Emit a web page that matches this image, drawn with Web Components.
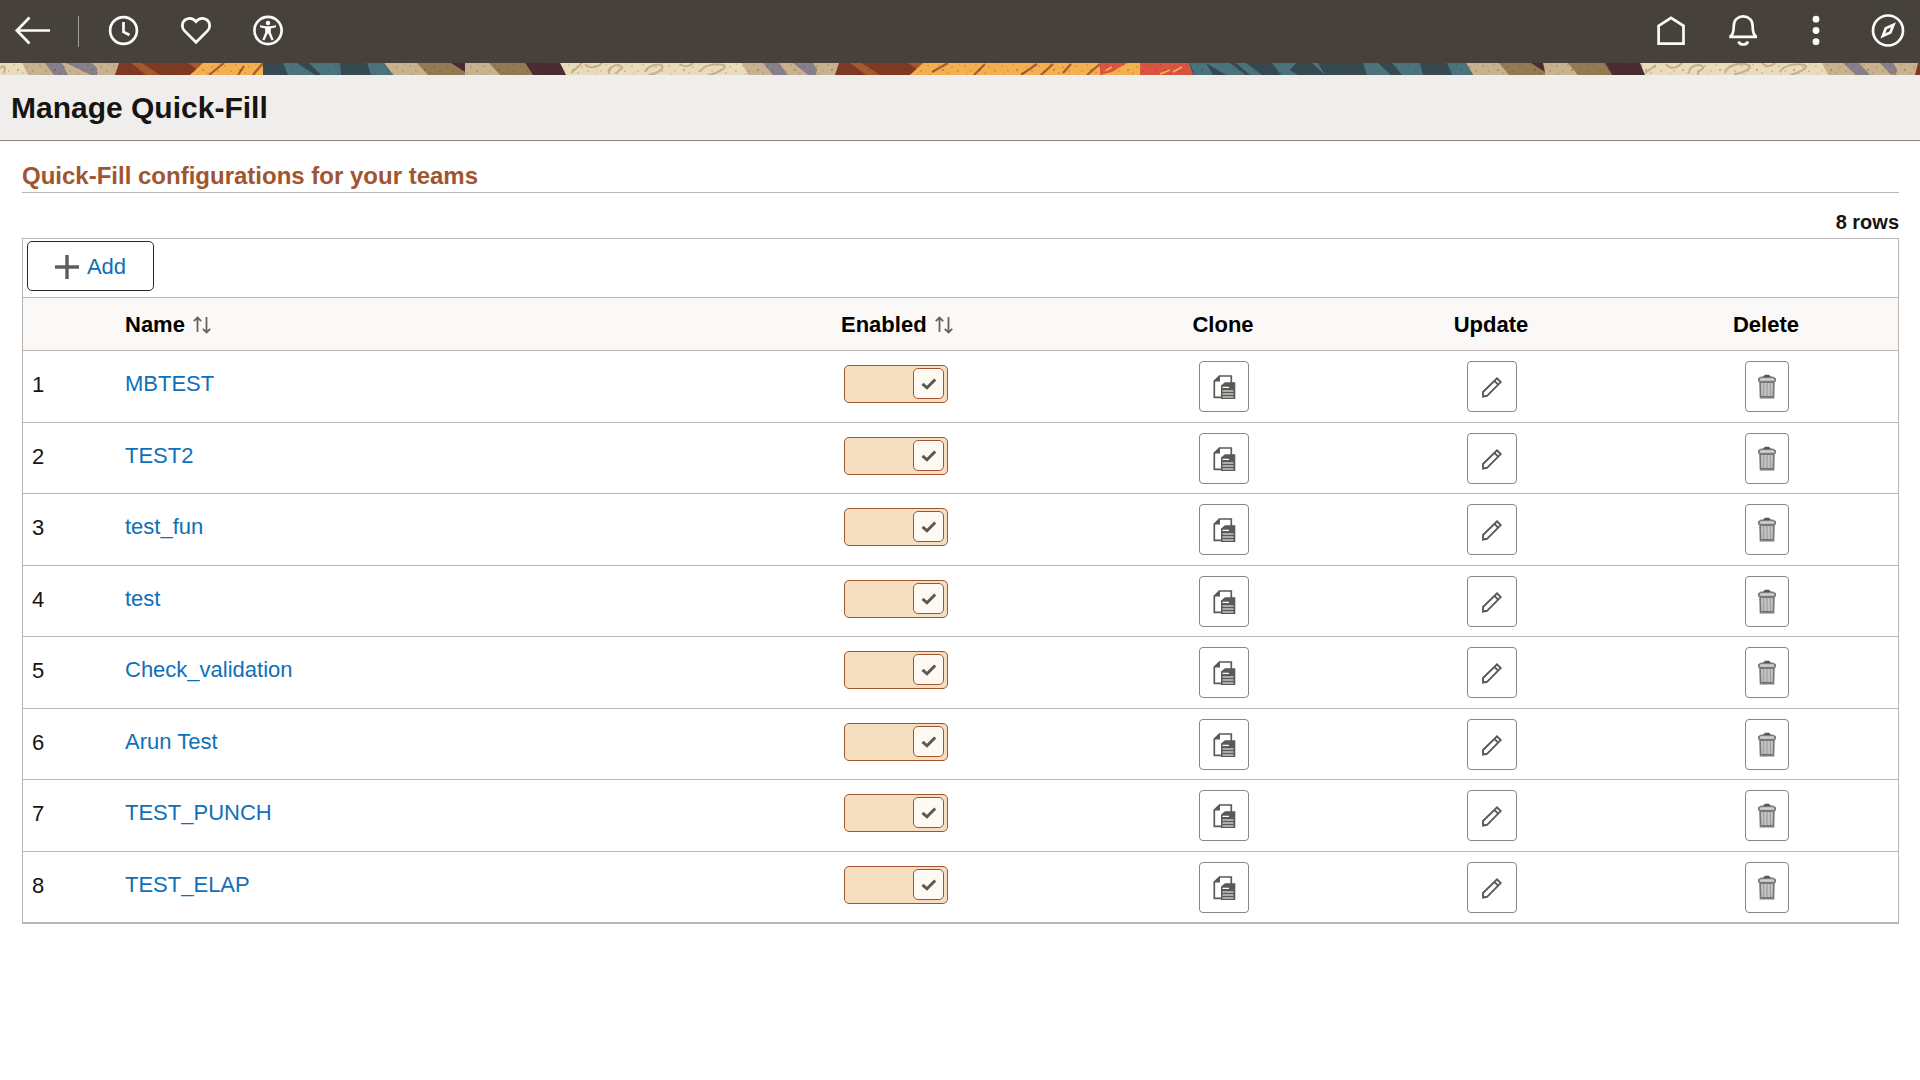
<!DOCTYPE html>
<html lang="en">
<head>
<meta charset="utf-8">
<title>Manage Quick-Fill</title>
<style>
  body { margin: 0; background: #fff; color: #161513; font-family: "Liberation Sans", Arial, sans-serif; font-size: 22px; }
</style>
</head>
<body>
<quick-fill-page></quick-fill-page>

<script>
const ICONS = {
  back: ['0 0 36 36', '<path d="M36 17.500H3M15.500 4.500 2.800 17.500 15.500 30.500" class="s"/>'],
  clock: ['0 0 36 36', '<circle cx="17.500" cy="17.500" r="13.400" class="s"/><path d="M17.500 9v10l6 3" class="s"/>'],
  heart: ['0 0 36 36', '<path d="M18 29.300 6.600 17.900C3 14 4 8.500 7.800 6.500 11.500 4.700 15.500 5.700 18 8.600 20.500 5.700 24.500 4.700 28.200 6.500 32 8.500 33 14 29.400 17.900Z" class="s"/>'],
  access: ['0 0 36 36', '<circle cx="18" cy="17.500" r="13.600" class="s"/><circle cx="18" cy="10" r="2.200" fill="currentColor"/><path d="M10 12.200 16 13.200h4l6-1v2l-5.200 1.300v4l2.800 7.200-2 .8-3.300-7h-.6l-3.300 7-2-.8 2.800-7.200v-4L10 14.200Z" fill="currentColor"/>'],
  home: ['0 0 36 36', '<path d="M4.600 12.800 17 4.900l12.500 7.900v17.800H4.600Z" class="s"/>'],
  bell: ['0 0 36 36', '<path d="M3.200 23.900H31M4.200 23.500C7.200 22 7.800 18 7.800 12.500 7.800 7 12 3.400 17.200 3.400S26.600 7 26.600 12.500c0 5.500.6 9.500 3.600 11" class="s"/><path d="M12.500 28.500c1.500 4 8 4 9.500 0" class="s"/>'],
  more: ['0 0 36 36', '<g fill="currentColor"><circle cx="18" cy="6.200" r="3.400"/><circle cx="18" cy="17.500" r="3.400"/><circle cx="18" cy="28.700" r="3.400"/></g>'],
  compass: ['0 0 36 36', '<circle cx="18" cy="17.500" r="15" class="s"/><path d="M23.500 11.800 20.400 19.600 12.800 23 15.800 15.200Z" class="s"/>'],
  plus: ['0 0 24 24', '<path d="M10.300 0h3.400v10.300H24v3.400H13.700V24h-3.400V13.700H0v-3.400h10.300Z" fill="currentColor"/>'],
  sort: ['0 0 18 18', '<path d="M4.500 16V2M.8 5.200 4.500 1.500 8.200 5.200M13.500 1v15M9.800 12.800l3.700 3.700 3.700-3.700" fill="none" stroke="currentColor" stroke-width="1.800"/>'],
  clone: ['0 0 24 25', '<path d="M19.300 9V2H7.500L2.300 7v16.300H9" fill="none" stroke="currentColor" stroke-width="1.700"/><path d="M1.500 7.500 8 1.200V7.500Z" fill="currentColor"/><path d="M13 8.300H23.300V25H9V11.500Z" fill="currentColor"/><path d="M10.500 13.300h6.500M10.500 17h11M10.500 20h11M10.500 23h11" stroke="#fff" stroke-width="1.200"/>'],
  pencil: ['0 0 24 25', '<path d="M3 22.500V18L17 4.300l3.700 3.800L7 21.800Z M14.300 6.800l3.900 3.900" fill="none" stroke="currentColor" stroke-width="1.900"/>'],
  trash: ['0 0 24 25', '<path d="M4.200 6.500h15.600L19.300 24.500H4.700Z" fill="#777"/><path d="M6 9h12l-.5 14.500H6.500Z" fill="#c4c4c4"/><path d="M8.600 9v13.500M12 9v13.500M15.400 9v13.500" stroke="#a0a0a0" stroke-width="1.300"/><path d="M6.500 22.800h11" stroke="#666" stroke-width="1.400"/><path d="M3 7.700V4.200L6 2.500h12l3 1.700v3.500Z" fill="#7c7c7c"/><path d="M4.500 6.700 5.500 4.200h13l1 2.500Z" fill="#d2d2d2"/><path d="M8 3 10 .8h4L16 3Z" fill="#555"/>'],
  check: ['0 0 16 12', '<path d="M1.500 5.800 6 9.800 14.200 1.500" fill="none" stroke="currentColor" stroke-width="3"/>']
};

class UiIcon extends HTMLElement {
  connectedCallback() {
    const [box, shapes] = ICONS[this.getAttribute('name')];
    const [, , w, h] = box.split(' ');
    this.attachShadow({ mode: 'open' }).innerHTML = `
      <style>
        :host { display: inline-flex; flex: none; }
        svg { display: block; }
        .s { fill: none; stroke: currentColor; stroke-width: 2.700; }
      </style>
      <svg viewBox="${box}" width="${w}" height="${h}" aria-hidden="true">${shapes}</svg>`;
  }
}
customElements.define('ui-icon', UiIcon);

class NavButton extends HTMLElement {
  connectedCallback() {
    this.attachShadow({ mode: 'open' }).innerHTML = `
      <style>
        :host { display: flex; }
        button { display: flex; justify-content: center; align-items: center; width: 56px; height: 48px;
                 margin: 0; padding: 0; border: 0; background: none; color: #fcfbfa; cursor: pointer; }
      </style>
      <button type="button" aria-label="${this.getAttribute('label')}"><ui-icon name="${this.getAttribute('icon')}"></ui-icon></button>`;
  }
}
customElements.define('nav-button', NavButton);

class AppBar extends HTMLElement {
  connectedCallback() {
    this.attachShadow({ mode: 'open' }).innerHTML = `
      <style>
        :host { display: block; background: #47413c; }
        header { display: flex; justify-content: space-between; align-items: center; height: 62px; padding: 0 4px 1px; }
        nav { display: flex; align-items: center; gap: 16px; }
        .rule { width: 1px; height: 31px; margin: 0 1px 0 2px; background: #a39f9b; }
      </style>
      <header>
        <nav aria-label="History">
          <nav-button icon="back" label="Back"></nav-button>
          <span class="rule"></span>
          <nav-button icon="clock" label="Recently visited"></nav-button>
          <nav-button icon="heart" label="Favorites"></nav-button>
          <nav-button icon="access" label="Accessibility"></nav-button>
        </nav>
        <nav aria-label="Global">
          <nav-button icon="home" label="Home"></nav-button>
          <nav-button icon="bell" label="Notifications"></nav-button>
          <nav-button icon="more" label="Actions"></nav-button>
          <nav-button icon="compass" label="Navigation bar"></nav-button>
        </nav>
      </header>`;
  }
}
customElements.define('app-bar', AppBar);

class ArtStrip extends HTMLElement {
  connectedCallback() {
    const poly = (fill, list) => list.map(p => `<polygon fill="${fill}" points="${p}"/>`).join('');
    this.attachShadow({ mode: 'open' }).innerHTML = `
      <style>:host { display: block; } svg { display: block; width: 100%; height: 12px; }</style>
      <svg viewBox="0 0 1920 12" preserveAspectRatio="xMidYMin slice" aria-hidden="true">
        <defs>
          <pattern id="grain" width="37" height="12" patternUnits="userSpaceOnUse">
            <g fill="#4a3628" fill-opacity=".38">
              <circle cx="3" cy="3" r=".8"/><circle cx="9" cy="8" r=".7"/><circle cx="14" cy="2" r=".7"/>
              <circle cx="18" cy="7" r="1"/><circle cx="23" cy="10" r=".7"/><circle cx="27" cy="4" r=".8"/>
              <circle cx="33" cy="8" r=".8"/><circle cx="34" cy="1" r=".6"/><circle cx="5" cy="11" r=".6"/>
            </g>
          </pattern>
        </defs>
        <rect width="1920" height="12" fill="#c7b18e"/>
        ${poly('#e9dcbd', ['0,0 22,0 28,12 0,12', '560,0 742,0 748,12 566,12', '1640,0 1822,0 1828,12 1645,12'])}
        ${poly('#87808a', ['45,0 62,0 68,12 54,12', '66,0 92,0 97,5 97,12 91,12', '763,0 779,0 788,12 773,12', '793,0 813,0 817,6 816,12 808,12', '1843,0 1859,0 1870,12 1856,12', '1880,0 1893,0 1897,6 1896,12 1890,11'])}
        ${poly('#7e3922', ['119,0 205,0 190,12 115,12', '839,0 925,0 910,12 835,12', '1918,0 1920,0 1920,12 1915,12'])}
        ${poly('#a65830', ['131,0 142,0 160,12 146,12', '188,0 204,0 198,7', '850,0 862,0 880,12 866,12', '908,0 924,0 918,7'])}
        ${poly('#f4af4e', ['203,0 263,0 263,12 190,12', '923,0 1140,0 1140,12 910,12'])}
        <path d="M224 0 209 12M244 3 238 12M263 0 253 12M985 1 974 12M948 0 932 9M1037 1 1021 12M1053 1 1041 12M1071 1 1063 10M1100 1 1087 12" stroke="#a85a32" stroke-width="2.200" fill="none"/>
        ${poly('#d95441', ['1100,0 1127,0 1112,9 1100,12', '1140,0 1189,0 1193,12 1140,12'])}
        <path d="M1105 8l7-4M1160 11l10-4M1173 9l9-5" stroke="#f4af4e" stroke-width="1.600"/>
        ${poly('#364850', ['263,0 384,0 393,12 263,12', '1189,0 1466,0 1473,12 1193,12'])}
        ${poly('#4b737b', ['283,0 297,0 315,12 288,12', '309,0 340,0 341,12 321,12', '367,0 384,0 393,12 371,12', '1190,0 1206,0 1213,12 1194,12', '1206,0 1230,0 1246,12 1226,12', '1236,0 1246,0 1262,12 1250,12', '1272,0 1296,0 1290,7 1298,12 1281,12', '1312,0 1318,0 1325,12', '1363,0 1378,0 1391,12 1367,12', '1392,0 1420,0 1423,12 1402,12', '1447,0 1466,0 1473,12 1452,12'])}
        ${poly('#947a53', ['417,0 452,0 465,9 465,12 428,12', '489,0 525,0 533,12 500,12', '1499,0 1532,0 1545,9 1545,12 1509,12', '1568,0 1605,0 1612,12 1578,12'])}
        ${poly('#4b2b31', ['451,0 465,0 465,9', '525,0 560,0 566,12 533,12', '1531,0 1543,0 1545,9', '1605,0 1640,0 1645,12 1612,12'])}
        <rect width="1920" height="12" fill="url(#grain)"/>
        <g fill="none" stroke="#c6ae88" stroke-width="2">
          <path d="M0 5c4-4 7 0 3 5M571 10l11-10M585 1c3 5 13 4 17-1M609 11c-2-6 7-11 12-8s-5 3-4 8M645 9c3-7 14-9 17-6s-8 9-14 9M680 1c5 4 10 2 13-1M700 9c3-7 16-9 23-7s-8 9-14 10"/>
          <path d="M1645 10l11-8M1666 1c4 6 12 4 16-1M1689 10c0-6 8-10 13-7s-6 4-4 9M1725 9c3-7 16-10 23-7s-8 9-14 9M1762 0c3 4 9 4 13 0M1780 9c3-7 16-9 24-7s-8 9-14 10"/>
        </g>
      </svg>`;
  }
}
customElements.define('art-strip', ArtStrip);

class PageHeading extends HTMLElement {
  connectedCallback() {
    this.attachShadow({ mode: 'open' }).innerHTML = `
      <style>
        :host { display: block; background: #f0eeec; border-bottom: 1px solid #8b8580; }
        h1 { margin: 0; padding: 0 11px; font-size: 30px; line-height: 65px; font-weight: bold; }
      </style>
      <h1><slot></slot></h1>`;
  }
}
customElements.define('page-heading', PageHeading);

class ToggleSwitch extends HTMLElement {
  connectedCallback() {
    this.attachShadow({ mode: 'open' }).innerHTML = `
      <style>
        :host { display: inline-block; vertical-align: top; }
        label { display: grid; width: 104px; height: 38px; cursor: pointer; }
        input, .knob { grid-area: 1 / 1; box-sizing: border-box; margin: 0; border: 1px solid #a0552f; border-radius: 5px; }
        input { appearance: none; width: 100%; height: 100%; background: #fff; cursor: pointer; }
        input:checked { background: #f5debf; }
        .knob { display: flex; justify-content: center; align-items: center; justify-self: start; align-self: start;
                width: 31px; height: 31px; margin: 3px 4px; background: #fff9f3; color: #5b5956; pointer-events: none; }
        .knob ui-icon { visibility: hidden; }
        input:checked + .knob { justify-self: end; }
        input:checked + .knob ui-icon { visibility: visible; }
      </style>
      <label><input type="checkbox" role="switch" checked aria-label="${this.getAttribute('label')}"><span class="knob"><ui-icon name="check"></ui-icon></span></label>`;
  }
}
customElements.define('toggle-switch', ToggleSwitch);

class RowButton extends HTMLElement {
  connectedCallback() {
    this.attachShadow({ mode: 'open' }).innerHTML = `
      <style>
        :host { display: inline-block; vertical-align: top; width: 50px; }
        :host([icon="trash"]) { width: 44px; }
        button { display: flex; justify-content: center; align-items: center; box-sizing: border-box; width: 100%; height: 51px;
                 margin: 0; padding: 0; border: 1px solid #8b8580; border-radius: 4px; background: #fff; color: #5b5956; cursor: pointer; }
      </style>
      <button type="button" aria-label="${this.getAttribute('label')}"><ui-icon name="${this.getAttribute('icon')}"></ui-icon></button>`;
  }
}
customElements.define('row-button', RowButton);

class QuickFillGrid extends HTMLElement {
  connectedCallback() {
    const names = ['MBTEST', 'TEST2', 'test_fun', 'test', 'Check_validation', 'Arun Test', 'TEST_PUNCH', 'TEST_ELAP'];
    const rows = names.map((name, i) => `
      <tr>
        <td class="num">${i + 1}</td>
        <td class="name"><a href="#${i + 1}">${name}</a></td>
        <td class="on"><toggle-switch label="Enable ${name}"></toggle-switch></td>
        <td class="act"><row-button icon="clone" label="Clone ${name}"></row-button></td>
        <td class="act"><row-button icon="pencil" label="Update ${name}"></row-button></td>
        <td class="act"><row-button icon="trash" label="Delete ${name}"></row-button></td>
      </tr>`).join('');
    this.attachShadow({ mode: 'open' }).innerHTML = `
      <style>
        :host { display: block; border: 1px solid #bab5b0; line-height: 24px; }
        .tools { display: flex; padding: 2px 4px 6px; border-bottom: 1px solid #bab5b0; }
        .add { display: flex; justify-content: center; align-items: center; gap: 8px; box-sizing: border-box; width: 127px; height: 50px;
               margin: 0; padding: 2px 0 0; border: 1px solid #2b2926; border-radius: 5px; background: #fff;
               color: #0f6fb8; font: inherit; cursor: pointer; }
        .add ui-icon { color: #5f5d5a; }
        table { width: 100%; table-layout: fixed; border-collapse: separate; border-spacing: 0; }
        th, td { box-sizing: border-box; padding: 0; border-bottom: 1px solid #bab5b0; text-align: left; vertical-align: top; }
        th { height: 53px; padding: 1px 10px 0; background: #faf9f8; color: #000; font-weight: bold; vertical-align: middle; }
        th.mid { padding: 1px 0 0; text-align: center; }
        .sort { display: inline-flex; align-items: center; gap: 8px; margin: 0; padding: 0; border: 0; background: none;
                color: inherit; font: inherit; cursor: pointer; }
        .sort ui-icon { color: #66635f; }
        tbody tr { height: 71px; }
        tbody tr:nth-child(odd) { height: 72px; }
        .num { padding: 22px 9px 0; }
        .name { padding: 21px 10px 0; }
        .on { padding: 14px 13px 0; }
        .act { padding: 10px 0 0 2px; text-align: center; }
        a { color: #0f6fb8; text-decoration: none; }
        .c-num { width: 92px; } .c-on { width: 267px; } .c-clone { width: 250px; } .c-update { width: 286px; } .c-delete { width: 264px; }
      </style>
      <div class="tools"><button type="button" class="add"><ui-icon name="plus"></ui-icon><span>Add</span></button></div>
      <table>
        <colgroup><col class="c-num"><col><col class="c-on"><col class="c-clone"><col class="c-update"><col class="c-delete"></colgroup>
        <thead>
          <tr>
            <th></th>
            <th scope="col"><button type="button" class="sort">Name<ui-icon name="sort"></ui-icon></button></th>
            <th scope="col"><button type="button" class="sort">Enabled<ui-icon name="sort"></ui-icon></button></th>
            <th scope="col" class="mid">Clone</th><th scope="col" class="mid">Update</th><th scope="col" class="mid">Delete</th>
          </tr>
        </thead>
        <tbody>${rows}</tbody>
      </table>`;
  }
}
customElements.define('quick-fill-grid', QuickFillGrid);

class QuickFillPage extends HTMLElement {
  connectedCallback() {
    this.attachShadow({ mode: 'open' }).innerHTML = `
      <style>
        :host { display: block; }
        main { padding: 19px 21px 40px 22px; }
        h2 { margin: 0; border-bottom: 1px solid #bab5b0; color: #a0552f; font-size: 24px; line-height: 32px; font-weight: bold; }
        .count { margin: 13px 0 0; font-size: 20px; line-height: 32px; font-weight: bold; text-align: right; }
      </style>
      <app-bar></app-bar>
      <art-strip></art-strip>
      <page-heading>Manage Quick-Fill</page-heading>
      <main>
        <h2>Quick-Fill configurations for your teams</h2>
        <p class="count">8 rows</p>
        <quick-fill-grid></quick-fill-grid>
      </main>`;
  }
}
customElements.define('quick-fill-page', QuickFillPage);
</script>
</body>
</html>
